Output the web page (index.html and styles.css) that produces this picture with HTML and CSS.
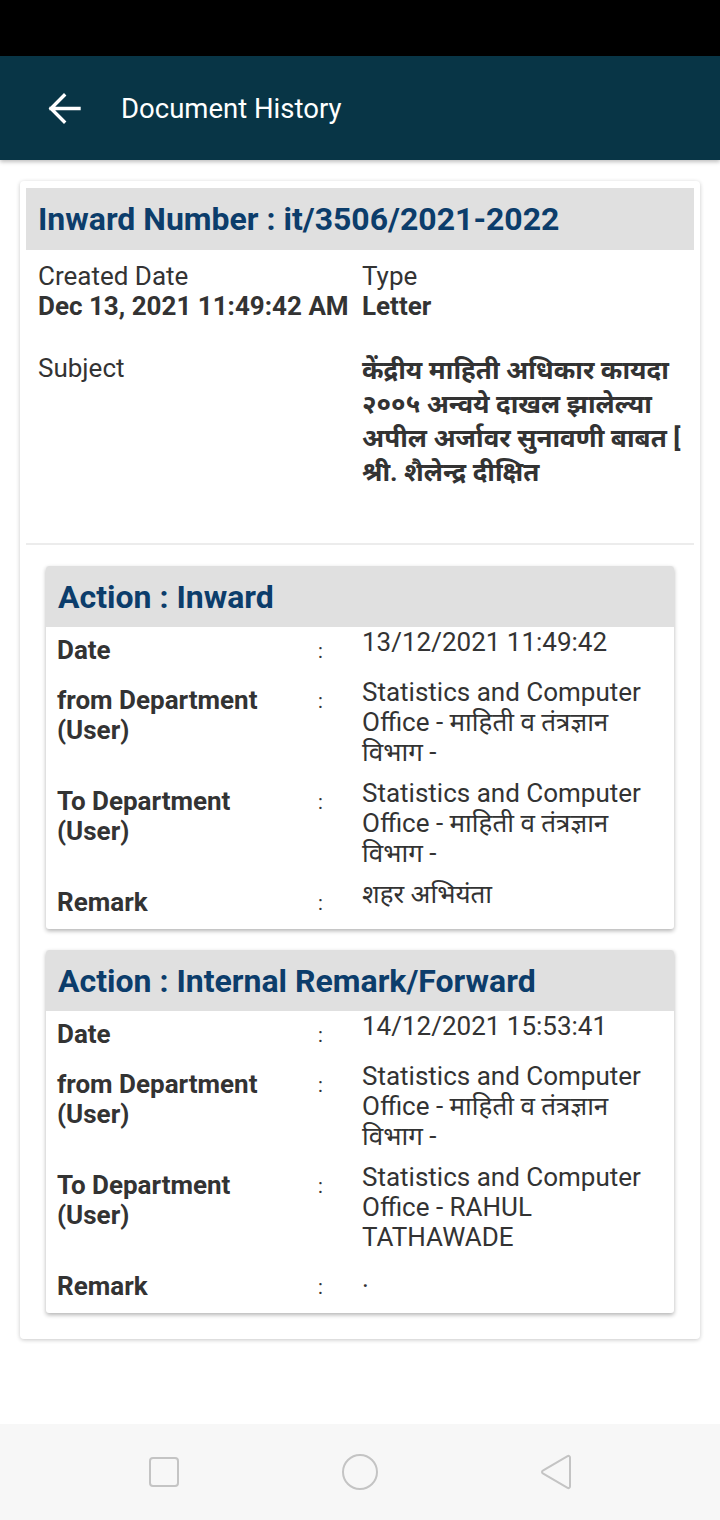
FILE: index.html
```html
<!DOCTYPE html>
<html lang="en">
<head>
<meta charset="utf-8">
<title>Document History</title>
<link rel="stylesheet" href="styles.css">
</head>
<body>
<div class="screen">
  <div class="statusbar"></div>
  <header class="appbar">
    <svg class="back" width="34" height="33" viewBox="0 0 34 33"><path d="M32 16.5H4 M17 3.5L4 16.5l13 13" fill="none" stroke="#fff" stroke-width="3.4" stroke-linecap="square"/></svg>
    <h1 class="title">Document History</h1>
  </header>
  <main class="content">
    <section class="card">
      <div class="inward-head">Inward Number : it/3506/2021-2022</div>
      <div class="meta">
        <div class="meta-cell">
          <div class="meta-label">Created Date</div>
          <div class="meta-value">Dec 13, 2021 11:49:42 AM</div>
        </div>
        <div class="meta-cell">
          <div class="meta-label">Type</div>
          <div class="meta-value">Letter</div>
        </div>
        <div class="meta-cell subject-label">
          <div class="meta-label">Subject</div>
        </div>
        <div class="meta-cell subject-value">
          <div class="subject-text">केंद्रीय माहिती अधिकार कायदा २००५ अन्वये दाखल झालेल्या अपील अर्जावर सुनावणी बाबत [ श्री. शैलेन्द्र दीक्षित</div>
        </div>
      </div>
      <hr class="divider">
      <div class="actions">
        <article class="action">
          <div class="action-head">Action : Inward</div>
          <div class="rows">
            <div class="row"><div class="lbl">Date</div><div class="colon">:</div><div class="val">13/12/2021 11:49:42</div></div>
            <div class="row"><div class="lbl">from Department (User)</div><div class="colon">:</div><div class="val">Statistics and Computer Office - माहिती व तंत्रज्ञान विभाग -</div></div>
            <div class="row"><div class="lbl">To Department (User)</div><div class="colon">:</div><div class="val">Statistics and Computer Office - माहिती व तंत्रज्ञान विभाग -</div></div>
            <div class="row"><div class="lbl">Remark</div><div class="colon">:</div><div class="val">शहर अभियंता</div></div>
          </div>
        </article>
        <article class="action">
          <div class="action-head">Action : Internal Remark/Forward</div>
          <div class="rows">
            <div class="row"><div class="lbl">Date</div><div class="colon">:</div><div class="val">14/12/2021 15:53:41</div></div>
            <div class="row"><div class="lbl">from Department (User)</div><div class="colon">:</div><div class="val">Statistics and Computer Office - माहिती व तंत्रज्ञान विभाग -</div></div>
            <div class="row"><div class="lbl">To Department (User)</div><div class="colon">:</div><div class="val">Statistics and Computer Office - RAHUL TATHAWADE</div></div>
            <div class="row"><div class="lbl">Remark</div><div class="colon">:</div><div class="val dot">.</div></div>
          </div>
        </article>
      </div>
    </section>
  </main>
  <nav class="navbar">
    <svg width="32" height="32" viewBox="0 0 32 32"><rect x="2" y="2" width="28" height="28" rx="3" fill="none" stroke="#c4c4c4" stroke-width="2"/></svg>
    <svg width="38" height="38" viewBox="0 0 38 38"><circle cx="19" cy="19" r="17" fill="none" stroke="#c4c4c4" stroke-width="2"/></svg>
    <svg width="34" height="38" viewBox="0 0 34 38"><path d="M31 4.5v29a1.6 1.6 0 0 1-2.4 1.4L3.8 20.4a1.6 1.6 0 0 1 0-2.8L28.6 3.1A1.6 1.6 0 0 1 31 4.5z" fill="none" stroke="#c4c4c4" stroke-width="2" stroke-linejoin="round"/></svg>
  </nav>
</div>
</body>
</html>
```

FILE: styles.css
```css
* { box-sizing: border-box; }
html, body { margin: 0; padding: 0; }
body {
  font-family: Roboto, "Noto Sans", "Liberation Sans", sans-serif;
  color: #333;
  background: #fff;
}
.screen {
  width: 720px;
  height: 1520px;
  display: flex;
  flex-direction: column;
  overflow: hidden;
}
.statusbar { height: 56px; background: #000; flex: none; }
.appbar {
  height: 104px;
  flex: none;
  background: #083546;
  display: flex;
  align-items: center;
  padding-left: 47px;
  box-shadow: 0 2px 4px rgba(0,0,0,0.25);
  position: relative;
  z-index: 1;
}
.back { margin-right: 40px; }
.title {
  margin: 0;
  color: #fff;
  font-weight: 400;
  font-size: 27.5px;
}
.content { padding: 21px 20px 0; flex: none; }
.card {
  background: #fff;
  border-radius: 4px;
  box-shadow: 0 1px 4px rgba(0,0,0,0.22);
  padding: 7px 6px 26px;
}
.inward-head {
  background: #e0e0e0;
  height: 62px;
  display: flex;
  align-items: center;
  padding-left: 12px;
  font-size: 32px;
  font-weight: 700;
  color: #0c3d6b;
}
.meta {
  display: grid;
  grid-template-columns: 324px 1fr;
  padding: 11px 12px 0;
}
.meta-label { font-size: 26px; line-height: 30px; }
.meta-value { font-size: 26px; line-height: 30px; font-weight: 700; }
.subject-label, .subject-value { margin-top: 32px; }
.subject-text {
  font-size: 26px;
  line-height: 34px;
  font-weight: 700;
}
.divider {
  border: 0;
  height: 2px;
  background: #ececec;
  margin: 54px 0 0;
}
.actions {
  padding: 21px 20px 0;
  display: flex;
  flex-direction: column;
  gap: 21px;
}
.action {
  background: #fff;
  border-radius: 3px;
  box-shadow: 0 2px 4px rgba(0,0,0,0.3);
  overflow: hidden;
}
.action-head {
  background: #e0e0e0;
  height: 61px;
  display: flex;
  align-items: center;
  padding-left: 12px;
  font-size: 32px;
  font-weight: 700;
  color: #0c3d6b;
}
.rows { padding: 0 0 0 11px; }
.row {
  display: grid;
  grid-template-columns: 261px 44px 1fr;
  padding-bottom: 11px;
}
.lbl {
  font-size: 26px;
  font-weight: 700;
  line-height: 30px;
  padding-top: 8px;
  padding-right: 24px;
}
.colon {
  font-size: 20px;
  line-height: 30px;
  padding-top: 9px;
}
.val {
  font-size: 26px;
  line-height: 30px;
  padding-right: 8px;
}
.navbar {
  margin-top: auto;
  height: 96px;
  flex: none;
  background: #f7f7f7;
  display: flex;
  align-items: center;
  justify-content: space-between;
  padding: 0 147px 0 148px;
}
```
